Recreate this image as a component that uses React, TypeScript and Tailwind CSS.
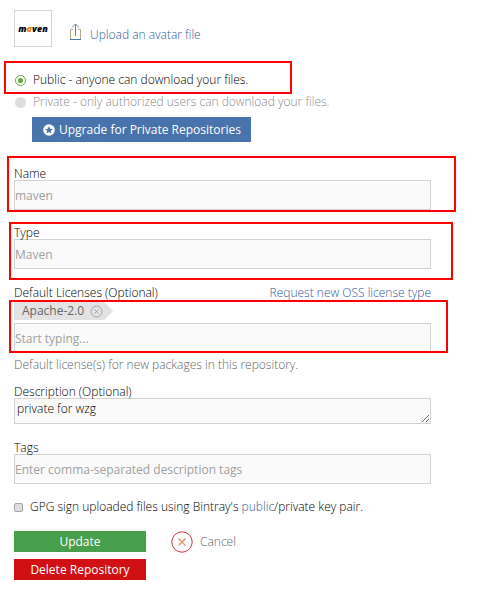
import React, { useState } from "react";

const LABEL = "block leading-4 -mb-0.5 font-light text-black";
const FIELD =
  "block w-full h-[30px] border border-[#d3d3d3] bg-[#fafafa] text-[12px] leading-4 text-[#555] placeholder:text-[#a0a0a0] disabled:text-[#a0a0a0] outline-none";
const RADIO = "appearance-none size-[11px] rounded-full shrink-0";

function Highlight({ className }: { className: string }) {
  return (
    <span
      aria-hidden="true"
      className={`absolute border-2 border-[#ff0000] pointer-events-none ${className}`}
    />
  );
}

function UploadIcon() {
  return (
    <svg width="13" height="18" viewBox="0 0 13 18" fill="none" aria-hidden="true">
      <path d="M4 6.5H1.5V16.5" stroke="#b3ad8c" />
      <path d="M9 6.5H11.5V16.5" stroke="#b3ad8c" />
      <path d="M1 16.5H12" stroke="#4a74ad" />
      <path d="M6.5 1V13M3 4.5L6.5 1L10 4.5" stroke="#6f8299" />
    </svg>
  );
}

function StarBadge() {
  return (
    <svg width="12" height="12" viewBox="0 0 12 12" aria-hidden="true">
      <circle cx="6" cy="6" r="5.8" fill="#fff" />
      <path
        d="M6 2L7.1 4.7L10 4.9L7.8 6.7L8.5 9.6L6 8L3.5 9.6L4.2 6.7L2 4.9L4.9 4.7Z"
        fill="#4873ac"
      />
    </svg>
  );
}

function RemoveIcon() {
  return (
    <svg width="13" height="13" viewBox="0 0 13 13" fill="none" stroke="#999" aria-hidden="true">
      <circle cx="6.5" cy="6.5" r="5.5" strokeWidth="0.9" />
      <path d="M4.5 4.5L8.5 8.5M8.5 4.5L4.5 8.5" strokeWidth="0.9" />
    </svg>
  );
}

function CancelIcon() {
  return (
    <svg width="22" height="22" viewBox="0 0 22 22" fill="none" aria-hidden="true">
      <circle cx="11" cy="11" r="10.2" stroke="#cf3a3a" />
      <path d="M7.5 7.5L14.5 14.5M14.5 7.5L7.5 14.5" stroke="#e58a62" strokeWidth="1.2" />
    </svg>
  );
}

export default function App() {
  const [description, setDescription] = useState("private for wzg");
  const [license, setLicense] = useState("");
  const [tags, setTags] = useState("");
  const [gpg, setGpg] = useState(false);

  return (
    <form
      className="bg-white pl-3.5 pr-[71px] py-2.5 font-['Open_Sans',sans-serif] text-[12px] leading-4"
      onSubmit={(e) => e.preventDefault()}
    >
      <div className="flex items-center h-[37px]">
        <div className="flex items-center justify-center w-[38px] h-[37px] border border-[#d3d3d3] text-[9px] leading-4 font-extrabold italic text-black">
          <span>
            m<span className="text-[#ee8422]">a</span>ven
          </span>
        </div>
        <a href="#avatar" className="flex items-end gap-2 ml-[17px] pt-2 font-light text-[#2f5c9c]">
          <span className="pb-0.5">
            <UploadIcon />
          </span>
          Upload an avatar file
        </a>
      </div>

      <div className="mt-[25px] flex flex-col items-start gap-1.5">
        <label className="relative flex items-center gap-[7px] pl-px font-light text-black">
          <input
            type="radio"
            name="visibility"
            defaultChecked
            className={`${RADIO} border border-[#63a83f] bg-[#63a83f] bg-clip-content p-0.5`}
          />
          Public - anyone can download your files.
          <Highlight className="-left-2.5 -right-11 -top-[11px] -bottom-1.5" />
        </label>
        <label className="flex items-center gap-[7px] pl-px font-light text-[#8c8c8c]">
          <input type="radio" name="visibility" disabled className={`${RADIO} bg-[#dedede]`} />
          Private - only authorized users can download your files.
        </label>
      </div>

      <button
        type="button"
        className="mt-[7px] ml-[18px] flex items-center gap-1 h-[25px] pl-[11px] pr-2.5 bg-[#4873ac] text-white"
      >
        <StarBadge />
        Upgrade for Private Repositories
      </button>

      <div className="relative mt-6">
        <label htmlFor="name" className={LABEL}>
          Name
        </label>
        <input id="name" className={FIELD} value="maven" disabled />
        <Highlight className="-left-[7px] -right-[25px] -top-2.5 -bottom-0.5" />
      </div>

      <div className="relative mt-[15px]">
        <label htmlFor="type" className={LABEL}>
          Type
        </label>
        <input id="type" className={FIELD} value="Maven" disabled />
        <Highlight className="-left-[5px] -right-[22px] -top-[3px] -bottom-[11px]" />
      </div>

      <div className="mt-4">
        <div className="flex justify-between h-[14px]">
          <label htmlFor="license" className={LABEL}>
            Default Licenses (Optional)
          </label>
          <a href="#request" className="font-light text-[#2f5c9c]">
            Request new OSS license type
          </a>
        </div>
        <div className="relative pt-[3px]">
          <div className="flex items-center gap-1.5 w-fit h-[18px] pl-2 pr-2.5 bg-[#e3e3e3] text-[#666] [clip-path:polygon(0_0,calc(100%-9px)_0,100%_50%,calc(100%-9px)_100%,0_100%)]">
            <span>Apache-2.0</span>
            <button type="button" aria-label="Remove Apache-2.0">
              <RemoveIcon />
            </button>
          </div>
          <input
            id="license"
            className={`${FIELD} mt-[3px]`}
            placeholder="Start typing..."
            value={license}
            onChange={(e) => setLicense(e.target.value)}
          />
          <Highlight className="-left-[5px] -right-[17px] top-px bottom-0" />
        </div>
        <p className="mt-1 font-light text-[#666]">
          Default license(s) for new packages in this repository.
        </p>
      </div>

      <div className="mt-[11px]">
        <label htmlFor="description" className={LABEL}>
          Description (Optional)
        </label>
        <textarea
          id="description"
          className="block w-full h-[26px] px-0.5 border border-[#d3d3d3] bg-[#fafafa] leading-5 font-light text-black resize overflow-hidden outline-none"
          value={description}
          onChange={(e) => setDescription(e.target.value)}
        />
      </div>

      <div className="mt-4">
        <label htmlFor="tags" className={LABEL}>
          Tags
        </label>
        <input
          id="tags"
          className={FIELD}
          placeholder="Enter comma-separated description tags"
          value={tags}
          onChange={(e) => setTags(e.target.value)}
        />
      </div>

      <div className="mt-[15px] flex items-center gap-[7px] font-light text-black">
        <input
          id="gpg"
          type="checkbox"
          checked={gpg}
          onChange={(e) => setGpg(e.target.checked)}
          className="appearance-none size-[9px] rounded-xs border border-[#a5a5a5] bg-[#dedede] checked:bg-[#555]"
        />
        <label htmlFor="gpg">
          GPG sign uploaded files using Bintray's{" "}
          <a href="#key" className="text-[#2f5c9c]">
            public
          </a>
          /private key pair.
        </label>
      </div>

      <div className="mt-4 flex items-center h-[21px]">
        <button type="submit" className="w-[132px] h-[21px] bg-[#479e4b] text-white">
          Update
        </button>
        <button type="button" className="ml-[25px] flex items-center gap-[7px] font-light text-[#666]">
          <CancelIcon />
          Cancel
        </button>
      </div>
      <button type="button" className="mt-[7px] block w-[132px] h-[21px] bg-[#d01013] text-white">
        Delete Repository
      </button>
    </form>
  );
}
